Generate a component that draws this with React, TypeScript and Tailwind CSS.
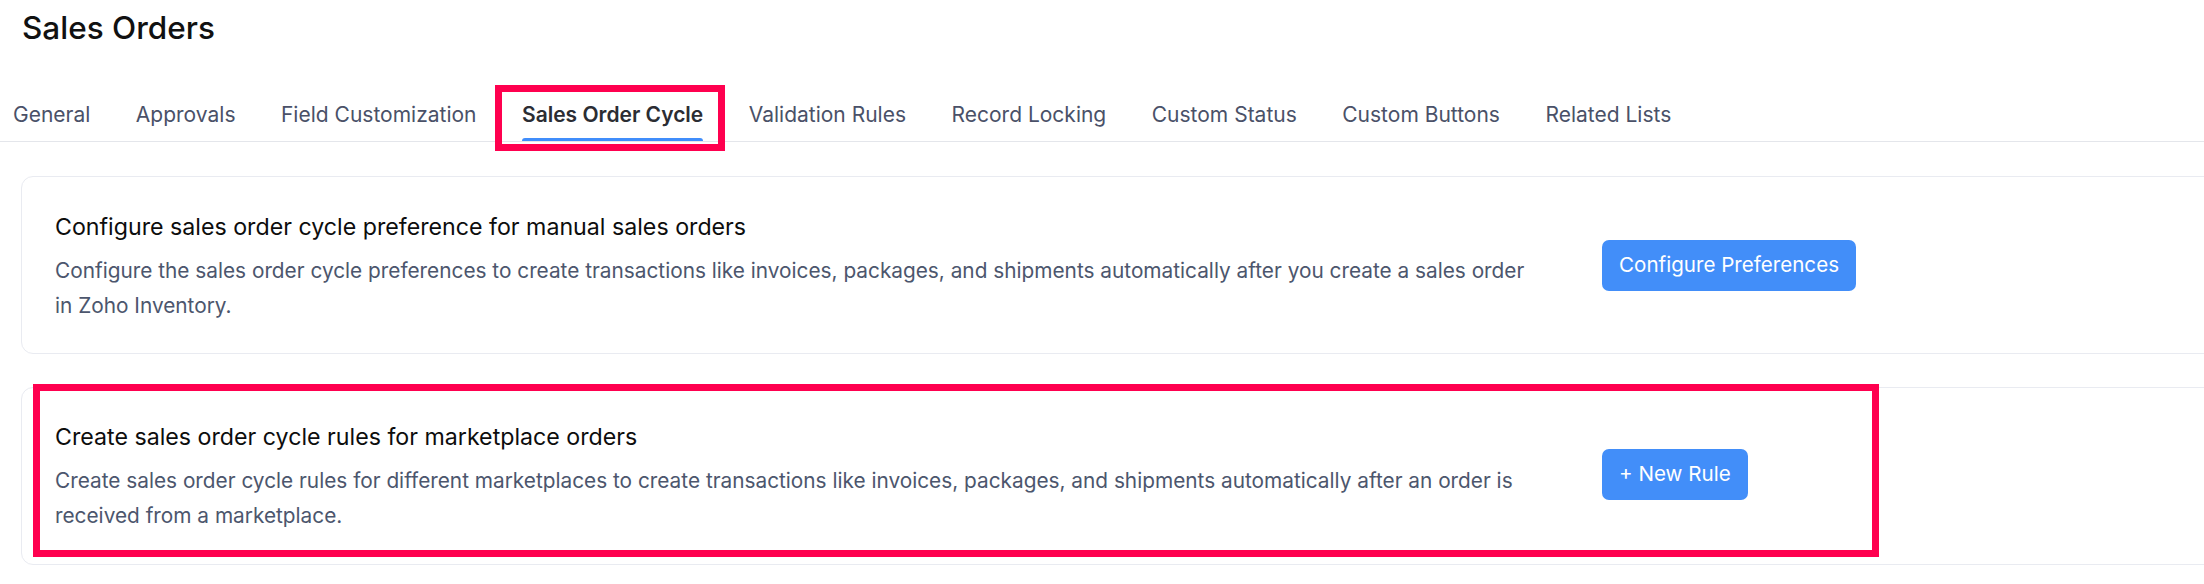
import React from 'react';

const tabs = [
  'General',
  'Approvals',
  'Field Customization',
  'Sales Order Cycle',
  'Validation Rules',
  'Record Locking',
  'Custom Status',
  'Custom Buttons',
  'Related Lists',
];

const ACTIVE = 'Sales Order Cycle';

export default function App() {
  return (
    <div className="w-full h-[584px] overflow-hidden bg-white font-['Inter','Noto_Sans',sans-serif]">
      {/* Page title */}
      <div className="pt-[10px] pl-[22px]">
        <h1 className="text-[31.5px] leading-[36px] font-medium text-[#111111]">Sales Orders</h1>
      </div>

      {/* Tabs */}
      <div className="mt-[57px] flex gap-[45.5px] pl-[13px] border-b border-[#e4e6eb]">
        {tabs.map((tab) => {
          const active = tab === ACTIVE;
          return (
            <div key={tab} className="relative pb-[13px]">
              <span
                className={
                  active
                    ? 'text-[21px] leading-[24px] font-semibold text-[#2b2d33] whitespace-nowrap'
                    : 'text-[21px] leading-[24px] text-[#4a5168] whitespace-nowrap'
                }
              >
                {tab}
              </span>
              {active && (
                <>
                  <span className="absolute left-0 right-0 bottom-0 h-[3px] rounded-t-[3px] bg-[#408dfb]" />
                  {/* annotation box */}
                  <span className="absolute left-[-27px] right-[-22px] top-[-18px] bottom-[-10px] border-[7px] border-[#ff004f]" />
                </>
              )}
            </div>
          );
        })}
      </div>

      {/* Cards */}
      <div className="pl-[21px] mt-[34px]">
        <div className="w-[2300px] h-[178px] rounded-[12px] border border-[#e9ebf1] pl-[33px] pt-[35px] flex">
          <div className="w-[1480px]">
            <h2 className="text-[23.2px] leading-[30px] text-[#0d0d0d]">
              Configure sales order cycle preference for manual sales orders
            </h2>
            <p className="mt-[11px] text-[20.8px] leading-[35px] text-[#4c566d]">
              Configure the sales order cycle preferences to create transactions like invoices, packages, and shipments
              automatically after you create a sales order in Zoho Inventory.
            </p>
          </div>
          <div className="ml-[67px] pt-[28px]">
            <button className="h-[51px] px-[17px] rounded-[7px] bg-[#428ef9] text-white text-[20.6px] whitespace-nowrap">
              Configure Preferences
            </button>
          </div>
        </div>

        <div className="relative mt-[33px] w-[2300px] h-[178px] rounded-[12px] border border-[#e9ebf1] pl-[33px] pt-[34px] flex">
          <div className="w-[1480px]">
            <h2 className="text-[23.2px] leading-[30px] text-[#0d0d0d]">
              Create sales order cycle rules for marketplace orders
            </h2>
            <p className="mt-[11px] text-[20.8px] leading-[35px] text-[#4c566d]">
              Create sales order cycle rules for different marketplaces to create transactions like invoices, packages,
              and shipments automatically after an order is received from a marketplace.
            </p>
          </div>
          <div className="ml-[67px] pt-[27px]">
            <button className="h-[51px] px-[17px] rounded-[7px] bg-[#428ef9] text-white text-[20.6px] whitespace-nowrap">
              + New Rule
            </button>
          </div>
          {/* annotation box */}
          <span className="absolute left-[11px] top-[-4px] w-[1846px] h-[173px] border-[7px] border-[#ff004f]" />
        </div>
      </div>
    </div>
  );
}
